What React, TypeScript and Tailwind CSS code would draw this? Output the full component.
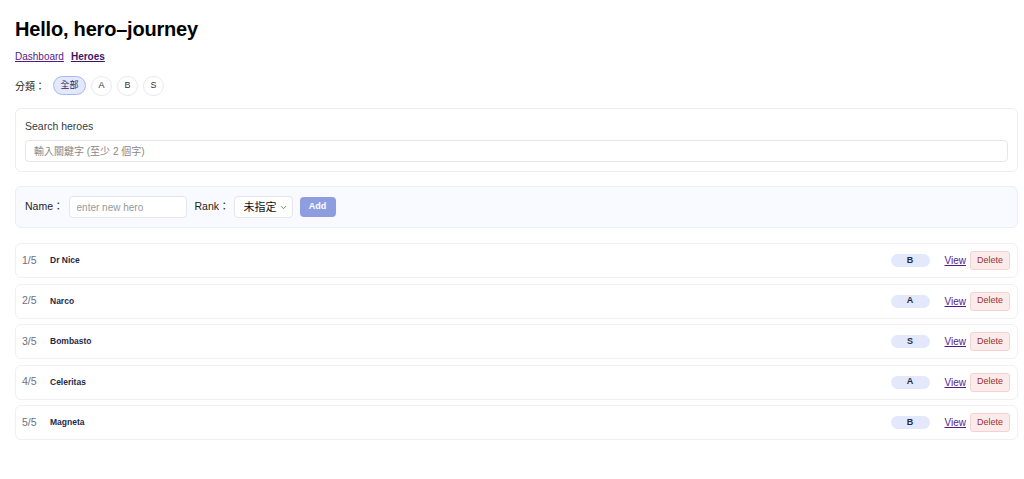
import React, { useState } from 'react';
import { ChevronDown } from 'lucide-react';

type Rank = 'A' | 'B' | 'S';

interface Hero {
  id: number;
  name: string;
  rank: Rank;
}

const HEROES: Hero[] = [
  { id: 1, name: 'Dr Nice', rank: 'B' },
  { id: 2, name: 'Narco', rank: 'A' },
  { id: 3, name: 'Bombasto', rank: 'S' },
  { id: 4, name: 'Celeritas', rank: 'A' },
  { id: 5, name: 'Magneta', rank: 'B' },
];

const FONT = { fontFamily: '"Liberation Sans", "Noto Sans CJK TC", Arial, sans-serif' };

export default function App() {
  const [filter, setFilter] = useState<'all' | Rank>('all');
  const [name, setName] = useState('');

  return (
    <div style={FONT} className="min-h-screen bg-white pl-[15px] pr-[6px] pt-[16px] text-black">
      <h1 className="text-[20px] font-bold leading-[26px] tracking-[-0.2px]">Hello, hero–journey</h1>

      <nav className="mt-[8px] flex gap-[7px] text-[10px] leading-[14px]">
        <a href="#" className="text-[#551a8b] underline">Dashboard</a>
        <a href="#" className="font-bold text-[#3d1466] underline">Heroes</a>
      </nav>

      {/* filter chips */}
      <div className="mt-[12px] flex h-[20px] items-center text-[10px]">
        <span className="mr-[8px] text-[#222]">分類：</span>
        <div className="flex gap-[5px]">
          <button
            onClick={() => setFilter('all')}
            className={`h-[19px] w-[33px] rounded-full border text-[9px] text-[#1e2b5c] ${
              filter === 'all' ? 'border-[#a9b7f0] bg-[#e3e8fc]' : 'border-[#e8e8f0] bg-white'
            }`}
          >
            全部
          </button>
          {(['A', 'B', 'S'] as Rank[]).map(r => (
            <button
              key={r}
              onClick={() => setFilter(r)}
              className={`h-[20px] w-[21px] rounded-full border text-[9px] text-[#333] ${
                filter === r ? 'border-[#a9b7f0] bg-[#e3e8fc]' : 'border-[#e8e8f0] bg-white'
              }`}
            >
              {r}
            </button>
          ))}
        </div>
      </div>

      {/* search */}
      <div className="mt-[12px] rounded-[6px] border border-[#eceef3] bg-white px-[9px] pb-[9px] pt-[10px]">
        <label className="block text-[10.5px] leading-[14px] text-[#333a45]">Search heroes</label>
        <input
          placeholder="輸入關鍵字 (至少 2 個字)"
          className="mt-[7px] h-[22px] w-full rounded-[4px] border border-[#e4e6eb] px-[8px] text-[10px] text-[#333] placeholder-[#888] outline-none"
        />
      </div>

      {/* add hero */}
      <div className="mt-[14px] flex h-[42px] items-center rounded-[6px] border border-[#eceef5] bg-[#f9faff] px-[9px] text-[10.5px] text-[#222]">
        <span>Name：</span>
        <input
          value={name}
          onChange={e => setName(e.target.value)}
          placeholder="enter new hero"
          className="ml-[5px] h-[22px] w-[118px] rounded-[4px] border border-[#e4e6eb] bg-white px-[7px] text-[10px] placeholder-[#999] outline-none"
        />
        <span className="ml-[8px]">Rank：</span>
        <div className="relative ml-[4px]">
          <select className="h-[22px] w-[59px] appearance-none rounded-[4px] border border-[#e4e6eb] bg-white pl-[9px] text-[11px] text-[#111] outline-none">
            <option>未指定</option>
            <option>A</option>
            <option>B</option>
            <option>S</option>
          </select>
          <ChevronDown size={9} strokeWidth={2} className="pointer-events-none absolute right-[5px] top-[7px] text-[#555]" />
        </div>
        <button className="ml-[7px] h-[20px] w-[36px] rounded-[4px] bg-[#8e9de0] text-[9px] font-bold text-white">Add</button>
      </div>

      {/* list */}
      <ul className="mt-[15px] flex flex-col gap-[5.5px]">
        {HEROES.map((h, i) => (
          <li
            key={h.id}
            className="flex h-[35px] items-center rounded-[6px] border border-[#eff0f4] bg-white pl-[6px] pr-[7px]"
          >
            <span className="w-[28px] text-[10.5px] text-[#6b7280]">{i + 1}/{HEROES.length}</span>
            <span className="text-[8.5px] font-bold text-[#1f2a48]">{h.name}</span>
            <span className="ml-auto flex h-[13px] w-[39px] items-center justify-center rounded-full bg-[#e3e8fc] text-[9px] font-bold text-[#1f2a48]">
              {h.rank}
            </span>
            <a href="#" className="ml-[15px] text-[10px] text-[#551a8b] underline">View</a>
            <button className="ml-[4px] h-[19px] w-[40px] rounded-[3px] border border-[#f3d2d0] bg-[#fbeceb] text-[9px] text-[#9b2f2f]">
              Delete
            </button>
          </li>
        ))}
      </ul>
    </div>
  );
}
